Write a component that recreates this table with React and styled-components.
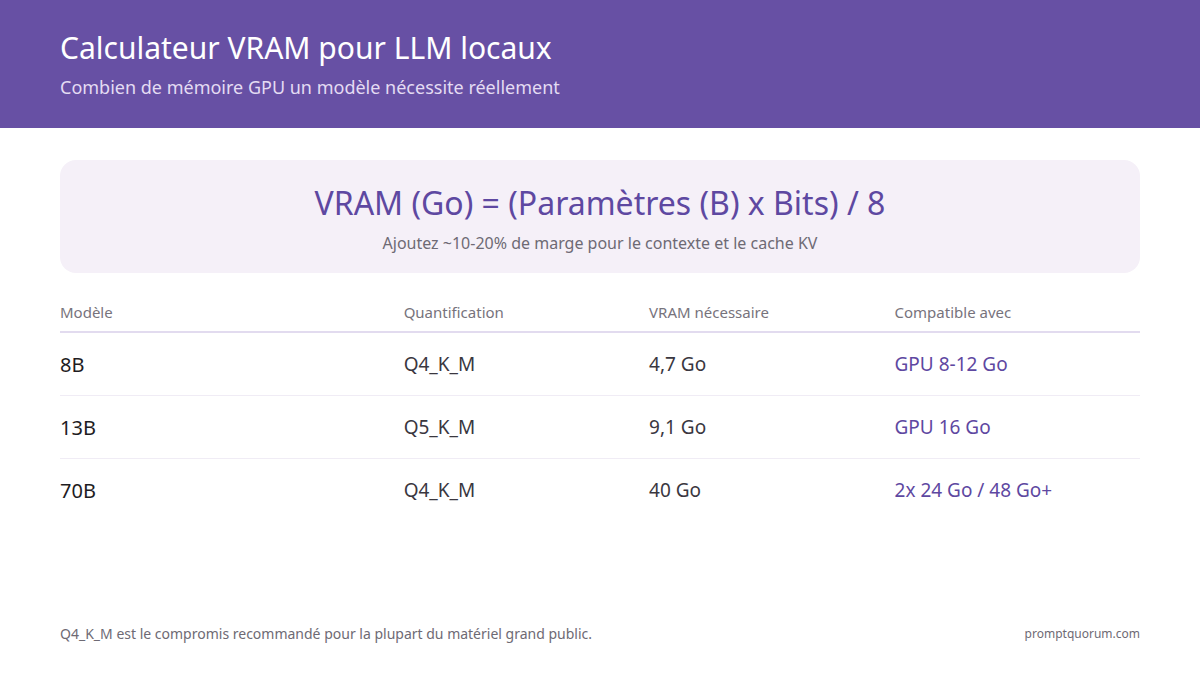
import React from 'react'
import styled, { createGlobalStyle } from 'styled-components'

const rows = [
  { model: '8B', quant: 'Q4_K_M', vram: '4,7 Go', gpu: 'GPU 8-12 Go' },
  { model: '13B', quant: 'Q5_K_M', vram: '9,1 Go', gpu: 'GPU 16 Go' },
  { model: '70B', quant: 'Q4_K_M', vram: '40 Go', gpu: '2x 24 Go / 48 Go+' },
]

const App = () => (
  <Page>
    <GlobalStyle />
    <Header>
      <Title>Calculateur VRAM pour LLM locaux</Title>
      <Subtitle>Combien de mémoire GPU un modèle nécessite réellement</Subtitle>
    </Header>
    <Main>
      <FormulaBox>
        <Formula>VRAM (Go) = (Paramètres (B) x Bits) / 8</Formula>
        <FormulaNote>Ajoutez ~10-20% de marge pour le contexte et le cache KV</FormulaNote>
      </FormulaBox>
      <Table>
        <HeadRow>
          <HeadCell>Modèle</HeadCell>
          <HeadCell>Quantification</HeadCell>
          <HeadCell>VRAM nécessaire</HeadCell>
          <HeadCell>Compatible avec</HeadCell>
        </HeadRow>
        {rows.map((r, i) => (
          <Row key={r.model} last={i === rows.length - 1}>
            <Cell strong>{r.model}</Cell>
            <Cell>{r.quant}</Cell>
            <Cell>{r.vram}</Cell>
            <Cell accent>{r.gpu}</Cell>
          </Row>
        ))}
      </Table>
    </Main>
    <Footer>
      <Note>Q4_K_M est le compromis recommandé pour la plupart du matériel grand public.</Note>
      <Site>promptquorum.com</Site>
    </Footer>
  </Page>
)

const GlobalStyle = createGlobalStyle`
  body {
    margin: 0;
    background: #fff;
    font-family: "Noto Sans", "Open Sans", sans-serif;
  }
`
const Page = styled.div`
  width: 1200px;
  height: 675px;
  display: flex;
  flex-direction: column;
  background: #fff;
`
const Header = styled.header`
  height: 128px;
  box-sizing: border-box;
  padding: 28px 60px 0;
  background: #6750a4;
  color: #fff;
`
const Title = styled.h1`
  margin: 0;
  font-size: 30px;
  font-weight: 400;
  line-height: 40px;
`
const Subtitle = styled.p`
  margin: 7px 0 0;
  font-size: 18px;
  line-height: 24px;
  color: #e4dcf3;
`
const Main = styled.main`
  flex: 1;
  padding: 32px 60px 0;
`
const FormulaBox = styled.div`
  height: 113px;
  box-sizing: border-box;
  padding-top: 22px;
  border-radius: 16px;
  background: #f5f0f8;
  text-align: center;
`
const Formula = styled.div`
  font-size: 32px;
  line-height: 42px;
  color: #5e48a1;
`
const FormulaNote = styled.div`
  margin-top: 8px;
  font-size: 16px;
  line-height: 22px;
  color: #6e6a74;
`
const Table = styled.div`
  margin-top: 20px;
`
const columns = `
  display: grid;
  grid-template-columns: 1.4fr 1fr 1fr 1fr;
  align-items: center;
`
const HeadRow = styled.div`
  ${columns}
  height: 40px;
  box-sizing: border-box;
  padding-bottom: 1px;
  border-bottom: 2px solid #e2dbef;
`
const HeadCell = styled.div`
  font-size: 15px;
  color: #77737c;
`
const Row = styled.div`
  ${columns}
  height: 62px;
  border-bottom: ${p => (p.last ? 'none' : '1px solid #f0ecf5')};
`
const Cell = styled.div`
  font-size: ${p => (p.strong ? '20px' : '19px')};
  color: ${p => (p.accent ? '#5e48a1' : p.strong ? '#1e1c22' : '#3a373f')};
`
const Footer = styled.footer`
  display: flex;
  justify-content: space-between;
  align-items: center;
  padding: 0 60px 32px;
  color: #6e6a74;
`
const Note = styled.span`
  font-size: 14px;
`
const Site = styled.span`
  font-size: 12px;
`

export default App
